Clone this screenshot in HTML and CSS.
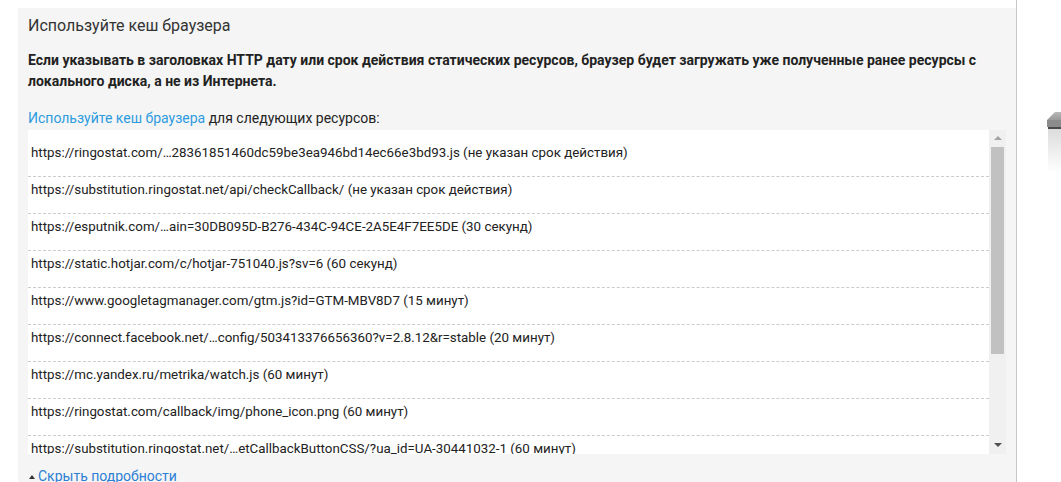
FILE: index.html
```html
<!DOCTYPE html>
<html lang="ru">
<head>
<meta charset="utf-8">
<link rel="stylesheet" href="styles.css">
</head>
<body>
<div class="page">
  <div class="main">
    <section class="panel">
      <h2 class="title">Используйте кеш браузера</h2>
      <p class="summary">Если указывать в заголовках HTTP дату или срок действия статических ресурсов, браузер будет загружать уже полученные ранее ресурсы с локального диска, а не из Интернета.</p>
      <p class="lead"><a class="link" href="#">Используйте кеш браузера</a> для следующих ресурсов:</p>
      <div class="listbox">
        <ul class="list">
          <li class="item">https://ringostat.com/…28361851460dc59be3ea946bd14ec66e3bd93.js (не указан срок действия)</li>
          <li class="item">https://substitution.ringostat.net/api/checkCallback/ (не указан срок действия)</li>
          <li class="item">https://esputnik.com/…ain=30DB095D-B276-434C-94CE-2A5E4F7EE5DE (30 секунд)</li>
          <li class="item">https://static.hotjar.com/c/hotjar-751040.js?sv=6 (60 секунд)</li>
          <li class="item">https://www.googletagmanager.com/gtm.js?id=GTM-MBV8D7 (15 минут)</li>
          <li class="item">https://connect.facebook.net/…config/503413376656360?v=2.8.12&amp;r=stable (20 минут)</li>
          <li class="item">https://mc.yandex.ru/metrika/watch.js (60 минут)</li>
          <li class="item">https://ringostat.com/callback/img/phone_icon.png (60 минут)</li>
          <li class="item">https://substitution.ringostat.net/…etCallbackButtonCSS/?ua_id=UA-30441032-1 (60 минут)</li>
          <li class="item">https://ringostat.com/callback/css/callback.css (60 минут)</li>
        </ul>
        <div class="scrollbar">
          <span class="arrow arrow-up"></span>
          <div class="track"><div class="thumb"></div></div>
          <span class="arrow arrow-down"></span>
        </div>
      </div>
      <a class="toggle" href="#"><span class="tri"></span>Скрыть подробности</a>
    </section>
  </div>
  <div class="divider"></div>
  <aside class="side">
    <svg class="device" width="16" height="60" viewBox="0 0 16 60">
      <defs>
        <linearGradient id="fade" x1="0" y1="0" x2="0" y2="1">
          <stop offset="0" stop-color="#dcdcdc"/>
          <stop offset="1" stop-color="#ffffff"/>
        </linearGradient>
        <linearGradient id="top" x1="0" y1="0" x2="0" y2="1">
          <stop offset="0" stop-color="#b8b8b8"/>
          <stop offset="1" stop-color="#9a9a9a"/>
        </linearGradient>
      </defs>
      <polygon points="0,8 8,0 16,0 16,8" fill="url(#top)"/>
      <rect x="0" y="8" width="16" height="7" fill="#8c8c8c"/>
      <rect x="1" y="15" width="15" height="2" fill="#4a4a4a"/>
      <rect x="1" y="17" width="15" height="43" fill="url(#fade)"/>
    </svg>
  </aside>
</div>
</body>
</html>
```

FILE: styles.css
```css
html, body {
  margin: 0;
  padding: 0;
  background: #ffffff;
}

body {
  font-family: Roboto, "Liberation Sans", Arial, sans-serif;
  color: #222222;
  width: 1061px;
  height: 482px;
  overflow: hidden;
}

.page {
  display: flex;
  height: 482px;
}

.main {
  width: 998px;
  padding: 8px 0 0 18px;
  flex: none;
}

.panel {
  background: #f5f5f5;
  height: 474px;
  padding: 0 10px;
  box-sizing: border-box;
  overflow: hidden;
}

.title {
  margin: 0;
  padding-top: 7px;
  font-size: 16px;
  font-weight: 400;
  line-height: 22px;
  color: #333333;
}

.summary {
  margin: 13px 0 0;
  font-size: 14px;
  font-weight: 700;
  line-height: 21px;
  color: #222222;
}

.lead {
  margin: 18px 0 0;
  font-size: 14px;
  line-height: 17px;
  color: #222222;
}

.link {
  color: #2d9be0;
  text-decoration: none;
}

.listbox {
  margin-top: 3px;
  display: flex;
  height: 324px;
  background: #ffffff;
  overflow: hidden;
}

.list {
  list-style: none;
  margin: 0;
  padding: 10px 0 0;
  flex: 1;
  min-width: 0;
}

.item {
  padding: 4px 3px 15px;
  line-height: 17px;
  font-size: 13.35px;
  color: #222222;
  white-space: nowrap;
  border-bottom: 1px dashed #cccccc;
}

.scrollbar {
  width: 17px;
  flex: none;
  background: #f0f0f0;
  display: flex;
  flex-direction: column;
  align-items: center;
}

.arrow {
  width: 0;
  height: 0;
  border-left: 4px solid transparent;
  border-right: 4px solid transparent;
  flex: none;
}

.arrow-up {
  margin-top: 6px;
  border-bottom: 4px solid #a3a3a3;
}

.arrow-down {
  margin: 6px 0 7px;
  border-top: 4px solid #505050;
}

.track {
  flex: 1;
  width: 13px;
  margin-top: 7px;
}

.thumb {
  height: 207px;
  background: #c1c1c1;
}

.toggle {
  display: inline-flex;
  align-items: center;
  margin-top: 15px;
  font-size: 14px;
  line-height: 15px;
  color: #2d7fd4;
  text-decoration: none;
}

.tri {
  width: 0;
  height: 0;
  border-left: 3px solid transparent;
  border-right: 3px solid transparent;
  border-bottom: 4px solid #333333;
  margin: 0 3px 0 1px;
}

.divider {
  width: 1px;
  flex: none;
  background: #c8c8c8;
}

.side {
  flex: 1;
  position: relative;
}

.device {
  position: absolute;
  left: 30px;
  top: 112px;
}
```
